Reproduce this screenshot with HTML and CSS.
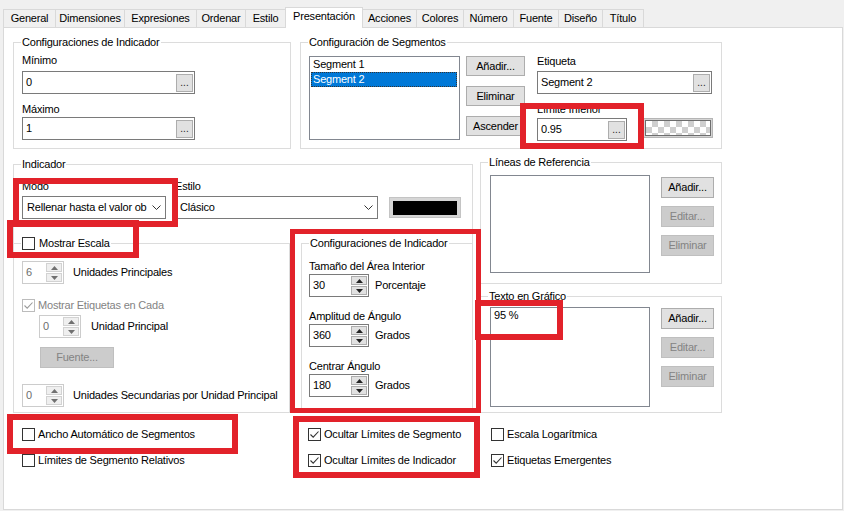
FILE: index.html
```html
<!DOCTYPE html>
<html lang="es">
<head>
<meta charset="utf-8">
<title>Propiedades del Gráfico</title>
<link rel="stylesheet" href="styles.css">
</head>
<body>
<div class="dialog">
  <div class="tabs">
    <div class="tab tab-general">General</div>
    <div class="tab tab-dim">Dimensiones</div>
    <div class="tab tab-expr">Expresiones</div>
    <div class="tab tab-ord">Ordenar</div>
    <div class="tab tab-est">Estilo</div>
    <div class="tab tab-pres active">Presentación</div>
    <div class="tab tab-acc">Acciones</div>
    <div class="tab tab-col">Colores</div>
    <div class="tab tab-num">Número</div>
    <div class="tab tab-fue">Fuente</div>
    <div class="tab tab-dis">Diseño</div>
    <div class="tab tab-tit">Título</div>
  </div>

  <div class="page">
    <div class="row-top">
      <div class="group g-limits">
        <span class="legend">Configuraciones de Indicador</span>
        <div class="lbl">Mínimo</div>
        <div class="textbox tb-limit"><span>0</span><span class="dots">...</span></div>
        <div class="lbl lbl-next">Máximo</div>
        <div class="textbox tb-limit"><span>1</span><span class="dots">...</span></div>
      </div>

      <div class="group g-segments">
        <span class="legend">Configuración de Segmentos</span>
        <div class="listbox lb-seg">
          <div class="item">Segment 1</div>
          <div class="item selected">Segment 2</div>
        </div>
        <div class="btn-col">
          <button class="btn b-seg">Añadir...</button>
          <button class="btn b-seg">Eliminar</button>
          <button class="btn b-seg">Ascender</button>
        </div>
        <div class="seg-props">
          <div class="lbl">Etiqueta</div>
          <div class="textbox tb-label"><span>Segment 2</span><span class="dots">...</span></div>
          <div class="lbl lbl-next">Límite Inferior</div>
          <div class="prop-row">
            <div class="textbox tb-lower"><span>0.95</span><span class="dots">...</span></div>
            <div class="swatch-btn"><div class="checker"></div></div>
          </div>
        </div>
      </div>
    </div>

    <div class="row-mid">
      <div class="group g-indicator">
        <span class="legend">Indicador</span>
        <div class="ind-top">
          <div class="field f-mode">
            <div class="lbl">Modo</div>
            <div class="select">
              <span class="sel-text">Rellenar hasta el valor ob</span>
              <svg class="chev" width="9" height="5" viewBox="0 0 9 5"><path d="M0.5 0.5 L4.5 4.5 L8.5 0.5" fill="none" stroke="#333" stroke-width="1"/></svg>
            </div>
          </div>
          <div class="field f-style">
            <div class="lbl">Estilo</div>
            <div class="select">
              <span class="sel-text">Clásico</span>
              <svg class="chev" width="9" height="5" viewBox="0 0 9 5"><path d="M0.5 0.5 L4.5 4.5 L8.5 0.5" fill="none" stroke="#333" stroke-width="1"/></svg>
            </div>
          </div>
          <div class="color-btn"><div class="color-fill"></div></div>
        </div>

        <div class="ind-bottom">
          <div class="group g-scale">
            <span class="legend"><span class="cb"></span>Mostrar Escala</span>
            <div class="srow">
              <div class="spin spin-dis spin-s"><span class="spin-val">6</span>
                <span class="arrows"><span class="arrow"><svg width="7" height="4" viewBox="0 0 7 4"><path d="M0 4 L3.5 0 L7 4Z"/></svg></span><span class="arrow"><svg width="7" height="4" viewBox="0 0 7 4"><path d="M0 0 L3.5 4 L7 0Z"/></svg></span></span>
              </div>
              <span class="srow-lbl">Unidades Principales</span>
            </div>
            <div class="check check-dis r-labels"><span class="cb cb-dis"><svg width="11" height="11" viewBox="0 0 11 11"><path d="M1.5 5.5 L4.2 8.2 L9.5 2.5" fill="none" stroke="#9a9a9a" stroke-width="1.1"/></svg></span>Mostrar Etiquetas en Cada</div>
            <div class="srow r-unit">
              <div class="spin spin-dis spin-s"><span class="spin-val">0</span>
                <span class="arrows"><span class="arrow"><svg width="7" height="4" viewBox="0 0 7 4"><path d="M0 4 L3.5 0 L7 4Z"/></svg></span><span class="arrow"><svg width="7" height="4" viewBox="0 0 7 4"><path d="M0 0 L3.5 4 L7 0Z"/></svg></span></span>
              </div>
              <span class="srow-lbl lbl-wide">Unidad Principal</span>
            </div>
            <button class="btn disabled b-font">Fuente...</button>
            <div class="srow r-sec">
              <div class="spin spin-dis spin-s"><span class="spin-val">0</span>
                <span class="arrows"><span class="arrow"><svg width="7" height="4" viewBox="0 0 7 4"><path d="M0 4 L3.5 0 L7 4Z"/></svg></span><span class="arrow"><svg width="7" height="4" viewBox="0 0 7 4"><path d="M0 0 L3.5 4 L7 0Z"/></svg></span></span>
              </div>
              <span class="srow-lbl">Unidades Secundarias por Unidad Principal</span>
            </div>
          </div>

          <div class="group g-gauge">
            <span class="legend">Configuraciones de Indicador</span>
            <div class="lbl">Tamaño del Área Interior</div>
            <div class="srow">
              <div class="spin spin-g"><span class="spin-val">30</span>
                <span class="arrows"><span class="arrow"><svg width="7" height="4" viewBox="0 0 7 4"><path d="M0 4 L3.5 0 L7 4Z"/></svg></span><span class="arrow"><svg width="7" height="4" viewBox="0 0 7 4"><path d="M0 0 L3.5 4 L7 0Z"/></svg></span></span>
              </div>
              <span class="unit">Porcentaje</span>
            </div>
            <div class="lbl lbl-gauge">Amplitud de Ángulo</div>
            <div class="srow">
              <div class="spin spin-g"><span class="spin-val">360</span>
                <span class="arrows"><span class="arrow"><svg width="7" height="4" viewBox="0 0 7 4"><path d="M0 4 L3.5 0 L7 4Z"/></svg></span><span class="arrow"><svg width="7" height="4" viewBox="0 0 7 4"><path d="M0 0 L3.5 4 L7 0Z"/></svg></span></span>
              </div>
              <span class="unit">Grados</span>
            </div>
            <div class="lbl lbl-gauge">Centrar Ángulo</div>
            <div class="srow">
              <div class="spin spin-g"><span class="spin-val">180</span>
                <span class="arrows"><span class="arrow"><svg width="7" height="4" viewBox="0 0 7 4"><path d="M0 4 L3.5 0 L7 4Z"/></svg></span><span class="arrow"><svg width="7" height="4" viewBox="0 0 7 4"><path d="M0 0 L3.5 4 L7 0Z"/></svg></span></span>
              </div>
              <span class="unit">Grados</span>
            </div>
          </div>
        </div>
      </div>

      <div class="right-col">
        <div class="group g-ref">
          <span class="legend">Líneas de Referencia</span>
          <div class="listbox lb-ref"></div>
          <div class="btn-stack">
            <button class="btn b-side">Añadir...</button>
            <button class="btn b-side disabled">Editar...</button>
            <button class="btn b-side disabled">Eliminar</button>
          </div>
        </div>
        <div class="group g-text">
          <span class="legend">Texto en Gráfico</span>
          <div class="listbox lb-text"><div class="item">95 %</div></div>
          <div class="btn-stack">
            <button class="btn b-side">Añadir...</button>
            <button class="btn b-side disabled">Editar...</button>
            <button class="btn b-side disabled">Eliminar</button>
          </div>
        </div>
      </div>
    </div>

    <div class="options">
      <div class="check"><span class="cb"></span>Ancho Automático de Segmentos</div>
      <div class="check"><span class="cb"><svg width="11" height="11" viewBox="0 0 11 11"><path d="M1.5 5.5 L4.2 8.2 L9.5 2.5" fill="none" stroke="#333" stroke-width="1.1"/></svg></span>Ocultar Límites de Segmento</div>
      <div class="check"><span class="cb"></span>Escala Logarítmica</div>
      <div class="check"><span class="cb"></span>Límites de Segmento Relativos</div>
      <div class="check"><span class="cb"><svg width="11" height="11" viewBox="0 0 11 11"><path d="M1.5 5.5 L4.2 8.2 L9.5 2.5" fill="none" stroke="#333" stroke-width="1.1"/></svg></span>Ocultar Límites de Indicador</div>
      <div class="check"><span class="cb"><svg width="11" height="11" viewBox="0 0 11 11"><path d="M1.5 5.5 L4.2 8.2 L9.5 2.5" fill="none" stroke="#333" stroke-width="1.1"/></svg></span>Etiquetas Emergentes</div>
    </div>
  </div>

  <div class="mark m-lower"></div>
  <div class="mark m-modo"></div>
  <div class="mark m-escala"></div>
  <div class="mark m-center"></div>
  <div class="mark m-text"></div>
  <div class="mark m-ancho"></div>
  <div class="mark m-ocultar"></div>
</div>
</body>
</html>
```

FILE: styles.css
```css
* { box-sizing: border-box; }

body {
  margin: 0;
  background: #f0f0f0;
  font-family: "Liberation Sans", Arial, sans-serif;
  font-size: 11px;
  letter-spacing: -0.2px;
  line-height: 15px;
  color: #000;
}

.dialog {
  position: relative;
  width: 844px;
  height: 511px;
  padding: 7px 0 0 3px;
  overflow: hidden;
}

/* ---------- tabs ---------- */
.tabs {
  display: flex;
  align-items: flex-end;
  height: 20px;
}
.tab {
  height: 18px;
  margin-left: -1px;
  border: 1px solid #d9d9d9;
  border-bottom: none;
  background: #f0f0f0;
  display: flex;
  align-items: center;
  justify-content: center;
  white-space: nowrap;
}
.tab:first-child { margin-left: 0; }
.tab.active {
  position: relative;
  z-index: 1;
  height: 21px;
  margin-bottom: -1px;
  padding-bottom: 3px;
  background: #fff;
}
.tab-general { width: 53px; }
.tab-dim { width: 70px; }
.tab-expr { width: 73px; }
.tab-ord { width: 50px; }
.tab-est { width: 41px; }
.tab-pres { width: 78px; }
.tab-acc { width: 55px; }
.tab-col { width: 48px; }
.tab-num { width: 51px; }
.tab-fue { width: 46px; }
.tab-dis { width: 45px; }
.tab-tit { width: 42px; }

/* ---------- page ---------- */
.page {
  width: 840px;
  height: 483px;
  background: #fff;
  border: 1px solid #d9d9d9;
  padding: 14px 0 0 9px;
}

.group {
  position: relative;
  border: 1px solid #dcdcdc;
}
.legend {
  position: absolute;
  top: -8px;
  left: 7px;
  padding: 0 1px;
  background: #fff;
  white-space: nowrap;
  display: flex;
  align-items: center;
  gap: 4px;
  line-height: 15px;
}

.lbl { line-height: 15px; white-space: nowrap; }
.lbl-next { margin-top: 8px; }

.textbox {
  height: 23px;
  border: 1px solid #7a7a7a;
  background: #fff;
  display: flex;
  align-items: center;
  justify-content: space-between;
  padding: 0 1px 0 3px;
}
.dots {
  width: 17px;
  height: 18px;
  background: #e1e1e1;
  border: 1px solid #adadad;
  text-align: center;
  font-size: 10px;
  line-height: 15px;
  letter-spacing: 0;
  color: #222;
}

.listbox {
  border: 1px solid #828790;
  background: #fff;
  padding: 0 2px 0 1px;
}
.item {
  line-height: 15px;
  padding-left: 2px;
  white-space: nowrap;
}
.item.selected {
  background: #0078d7;
  color: #fff;
  outline: 1px dotted #333;
  outline-offset: -1px;
}

.btn {
  font: inherit;
  letter-spacing: inherit;
  line-height: 15px;
  color: #000;
  background: #e1e1e1;
  border: 1px solid #adadad;
  padding: 0;
  margin: 0;
}
.btn.disabled {
  background: #cccccc;
  border-color: #bfbfbf;
  color: #838383;
}

/* top row */
.row-top { display: flex; gap: 9px; }
.g-limits {
  width: 278px;
  height: 107px;
  padding: 10px 0 0 8px;
}
.tb-limit { width: 173px; margin-top: 3px; }
.tb-limit + .lbl { margin-top: 8px; }
.lbl-next + .tb-limit { margin-top: 0; }

.g-segments {
  width: 422px;
  height: 107px;
  padding: 13px 0 0 8px;
  display: flex;
  align-items: flex-start;
}
.lb-seg { width: 151px; height: 84px; }
.btn-col {
  display: flex;
  flex-direction: column;
  gap: 10px;
  margin-left: 6px;
}
.b-seg { width: 59px; height: 20px; }
.seg-props { margin: -2px 0 0 12px; }
.tb-label { width: 175px; margin-top: 2px; }
.prop-row { display: flex; align-items: flex-start; margin-top: 1px; }
.tb-lower { width: 90px; }
.swatch-btn {
  width: 70px;
  height: 20px;
  margin-left: 16px;
  background: #d4d4d4;
  border: 1px solid #b5b5b5;
  padding: 1px;
}
.checker {
  width: 100%;
  height: 100%;
  border: 1px solid #6d6d6d;
  background-color: #fff;
  background-image: repeating-conic-gradient(#cfcfcf 0 25%, #fff 0 50%);
  background-size: 12px 12px;
}

/* middle row */
.row-mid {
  display: flex;
  align-items: flex-start;
  gap: 7px;
  margin-top: 13px;
}
.g-indicator {
  width: 460px;
  height: 249px;
  margin-top: 2px;
  padding: 14px 0 0 8px;
  display: flex;
  flex-direction: column;
}
.ind-top { display: flex; align-items: flex-end; gap: 9px; }
.field .select { margin-top: 2px; }
.f-mode { width: 144px; }
.f-style { width: 203px; }
.select {
  height: 23px;
  border: 1px solid #7a7a7a;
  background: #fff;
  display: flex;
  align-items: center;
  justify-content: space-between;
  padding: 0 4px 0 4px;
}
.sel-text { overflow: hidden; white-space: nowrap; }
.chev { flex: none; margin-left: 3px; }
.color-btn {
  width: 72px;
  height: 21px;
  margin: 0 0 1px 2px;
  background: #d6d6d6;
  border: 1px solid #c4c4c4;
  padding: 3px 3px 2px 3px;
}
.color-fill { width: 100%; height: 100%; background: #000; }

.ind-bottom {
  flex: 1;
  display: flex;
  gap: 11px;
  margin: 24px -1px -1px -9px;
}
.g-scale { width: 277px; padding: 17px 0 0 8px; }
.g-gauge { width: 172px; padding: 15px 0 0 7px; }

.srow { display: flex; align-items: center; }
.srow-lbl { margin-left: 9px; white-space: nowrap; }
.lbl-wide { margin-left: 10px; }
.unit { margin-left: 6px; white-space: nowrap; }

.spin {
  height: 23px;
  border: 1px solid #7a7a7a;
  background: #fff;
  display: flex;
  align-items: center;
  padding: 0 1px 0 3px;
}
.spin-val { flex: 1; }
.spin-s { width: 42px; }
.spin-g { width: 60px; }
.arrows {
  display: flex;
  flex-direction: column;
  gap: 1px;
  width: 16px;
}
.arrow {
  height: 9px;
  background: #e1e1e1;
  border: 1px solid #adadad;
  display: flex;
  align-items: center;
  justify-content: center;
}
.arrow svg { fill: #222; }
.spin-dis { border-color: #cccccc; color: #6d6d6d; }
.spin-dis .arrow { background: #efefef; border-color: #d2d2d2; }
.spin-dis .arrow svg { fill: #707070; }

.r-labels { margin-top: 14px; }
.r-unit { margin: 2px 0 0 17px; }
.b-font { display: block; width: 74px; height: 21px; margin: 9px 0 0 18px; }
.r-sec { margin-top: 16px; }

.lbl-gauge { margin-top: 12px; }

/* right column */
.right-col { display: flex; flex-direction: column; }
.g-ref {
  width: 242px;
  height: 122px;
  padding: 12px 0 0 9px;
  display: flex;
  align-items: flex-start;
}
.g-text {
  width: 242px;
  height: 117px;
  margin-top: 12px;
  padding: 10px 0 0 9px;
  display: flex;
  align-items: flex-start;
}
.lb-ref { width: 160px; height: 98px; }
.lb-text { width: 160px; height: 100px; }
.btn-stack {
  display: flex;
  flex-direction: column;
  gap: 8px;
  margin: 2px 0 0 11px;
}
.g-text .btn-stack { margin-top: 1px; }
.b-side { width: 53px; height: 21px; }

/* checkboxes */
.check {
  display: flex;
  align-items: center;
  gap: 3px;
  height: 15px;
  white-space: nowrap;
}
.cb {
  width: 13px;
  height: 13px;
  flex: none;
  border: 1px solid #333;
  background: #fff;
  display: inline-flex;
  align-items: center;
  justify-content: center;
}
.cb-dis { border-color: #bcbcbc; }
.check-dis { color: #838383; }

.options {
  display: grid;
  grid-template-columns: 286px 183px auto;
  row-gap: 11px;
  margin: 14px 0 0 9px;
}

/* red annotation boxes (overlays) */
.mark {
  position: absolute;
  border: 6px solid #e2222a;
  z-index: 5;
}
.m-lower { left: 520px; top: 103px; width: 124px; height: 46px; }
.m-modo { left: 13px; top: 178px; width: 165px; height: 49px; }
.m-escala { left: 7px; top: 220px; width: 132px; height: 38px; }
.m-center { left: 290px; top: 229px; width: 191px; height: 184px; border-width: 5px; }
.m-text { left: 475px; top: 300px; width: 88px; height: 40px; }
.m-ancho { left: 7px; top: 414px; width: 231px; height: 40px; }
.m-ocultar { left: 293px; top: 416px; width: 187px; height: 62px; }
```
